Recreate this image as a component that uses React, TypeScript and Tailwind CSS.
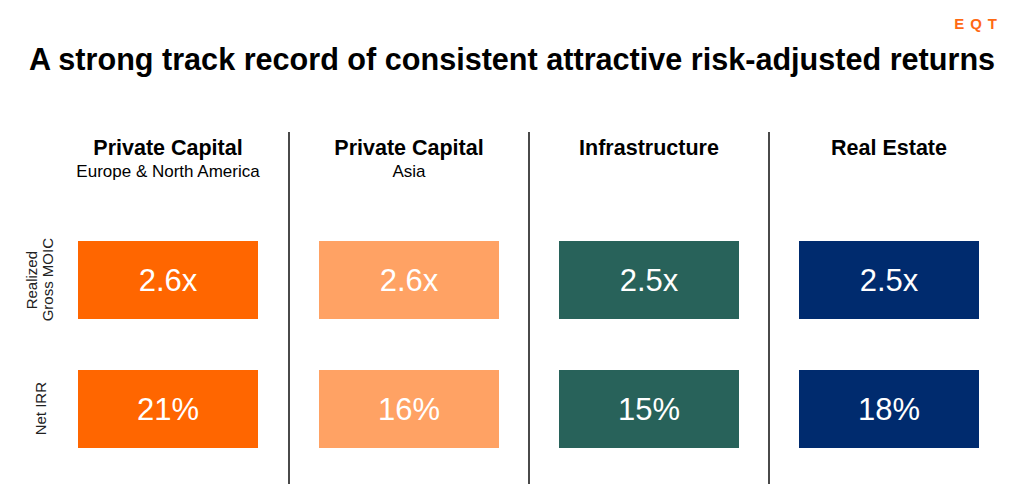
import React from "react";

const font = { fontFamily: '"Liberation Sans", Arial, Helvetica, sans-serif' };

type Col = {
  title: string;
  sub?: string;
  bg: string;
  moic: string;
  irr: string;
  border: boolean;
};

const cols: Col[] = [
  { title: "Private Capital", sub: "Europe & North America", bg: "bg-[#ff6600]", moic: "2.6x", irr: "21%", border: false },
  { title: "Private Capital", sub: "Asia", bg: "bg-[#ffa264]", moic: "2.6x", irr: "16%", border: true },
  { title: "Infrastructure", bg: "bg-[#28625a]", moic: "2.5x", irr: "15%", border: true },
  { title: "Real Estate", bg: "bg-[#002b6e]", moic: "2.5x", irr: "18%", border: true },
];

function Box({ bg, value }: { bg: string; value: string }) {
  return (
    <div className={`w-[180px] h-[78px] mx-auto flex items-center justify-center ${bg}`}>
      <span className="text-white text-[31px] leading-none">{value}</span>
    </div>
  );
}

export default function App() {
  return (
    <div className="w-[1024px] h-[484px] bg-white flex flex-col overflow-hidden text-black" style={font}>
      <div className="flex justify-end pt-[15px] pr-[21px] h-[33px]">
        <span className="text-[15px] leading-[17px] font-bold tracking-[6px] text-[#ff6a13]">EQT</span>
      </div>
      <h1 className="mt-[9px] text-center text-[30.6px] leading-[34px] font-bold">
        A strong track record of consistent attractive risk-adjusted returns
      </h1>
      <div className="mt-[56px] flex flex-1">
        <div className="w-[48px] flex flex-col">
          <div className="h-[109px]" />
          <div className="h-[78px] flex items-center justify-center pl-[31px]">
            <div className="[writing-mode:vertical-rl] rotate-180 text-[15px] leading-[16px] text-center text-[#222] whitespace-nowrap">
              Realized<br />Gross MOIC
            </div>
          </div>
          <div className="mt-[51px] h-[78px] flex items-center justify-center pl-[33px]">
            <div className="[writing-mode:vertical-rl] rotate-180 text-[15px] leading-[16px] text-center text-[#222] whitespace-nowrap">
              Net IRR
            </div>
          </div>
        </div>
        {cols.map((c, i) => (
          <div
            key={i}
            className={`w-[240px] flex flex-col ${c.border ? "border-l-2 border-[#4a4a4a]" : ""}`}
          >
            <div className="h-[109px] pt-[4px] flex flex-col items-center">
              <div className="text-[21.5px] leading-[24px] font-bold">{c.title}</div>
              {c.sub && <div className="mt-[2px] text-[17px] leading-[19px]">{c.sub}</div>}
            </div>
            <Box bg={c.bg} value={c.moic} />
            <div className="mt-[51px]">
              <Box bg={c.bg} value={c.irr} />
            </div>
          </div>
        ))}
      </div>
    </div>
  );
}
